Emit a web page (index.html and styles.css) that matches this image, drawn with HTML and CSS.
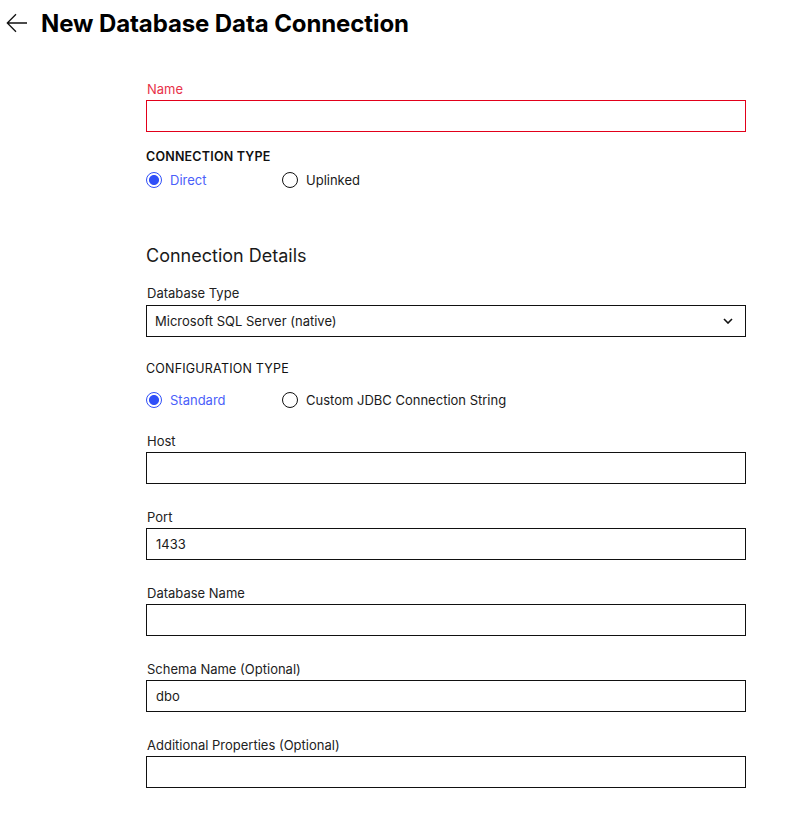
FILE: index.html
```html
<!DOCTYPE html>
<html lang="en">
<head>
<meta charset="utf-8">
<title>New Database Data Connection</title>
<link rel="stylesheet" href="styles.css">
</head>
<body>
<header class="page-header">
  <button class="back" aria-label="Back">
    <svg width="22" height="20" viewBox="0 0 22 20" fill="none" stroke="#111" stroke-width="1.3">
      <path d="M21 10H1.5M10 1.2L1.3 10L10 18.8"/>
    </svg>
  </button>
  <h1 class="title">New Database Data Connection</h1>
</header>

<main class="form">
  <div class="field name-field">
    <label class="label label-error">Name</label>
    <div class="input input-error"></div>
  </div>

  <div class="section-caption strong">CONNECTION TYPE</div>
  <div class="radio-row">
    <div class="radio checked"><span class="dot"></span><span>Direct</span></div>
    <div class="radio"><span class="dot"></span><span>Uplinked</span></div>
  </div>

  <h2 class="section-title">Connection Details</h2>

  <div class="field db-type">
    <label class="label">Database Type</label>
    <div class="input select">
      <span>Microsoft SQL Server (native)</span>
      <svg width="10" height="6" viewBox="0 0 10 6" fill="none" stroke="#111" stroke-width="1.6"><path d="M1 1L5 5L9 1"/></svg>
    </div>
  </div>

  <div class="section-caption config">CONFIGURATION TYPE</div>
  <div class="radio-row config-row">
    <div class="radio checked"><span class="dot"></span><span>Standard</span></div>
    <div class="radio"><span class="dot"></span><span>Custom JDBC Connection String</span></div>
  </div>

  <div class="field-list">
    <div class="field">
      <label class="label">Host</label>
      <div class="input"></div>
    </div>
    <div class="field">
      <label class="label">Port</label>
      <div class="input">1433</div>
    </div>
    <div class="field">
      <label class="label">Database Name</label>
      <div class="input"></div>
    </div>
    <div class="field">
      <label class="label">Schema Name (Optional)</label>
      <div class="input">dbo</div>
    </div>
    <div class="field">
      <label class="label">Additional Properties (Optional)</label>
      <div class="input"></div>
    </div>
  </div>
</main>
</body>
</html>
```

FILE: styles.css
```css
* { box-sizing: border-box; }

body {
  margin: 0;
  background: #fff;
  font-family: Inter, "Noto Sans", sans-serif;
  color: #1a1a1a;
}

.page-header {
  display: flex;
  align-items: center;
  height: 46px;
  padding-left: 6px;
}

.back {
  display: flex;
  border: 0;
  background: none;
  padding: 0;
  margin-right: 13px;
}

.title {
  margin: 0;
  font-size: 24px;
  font-weight: 700;
  color: #000;
  letter-spacing: -0.1px;
}

.form {
  width: 600px;
  margin-left: 146px;
  padding-top: 35px;
}

.field {
  display: flex;
  flex-direction: column;
  gap: 3px;
}

.label {
  font-size: 13px;
  line-height: 16px;
  color: #222;
  padding-left: 1px;
}

.label-error { color: #e8334a; }

.input {
  height: 32px;
  border: 1px solid #111;
  font-size: 13px;
  display: flex;
  align-items: center;
  padding: 0 9px;
  color: #1a1a1a;
}

.input-error { border-color: #e2001a; }

.select {
  justify-content: space-between;
  padding-left: 8px;
  padding-right: 12px;
  padding-bottom: 1px;
}

.section-caption {
  font-size: 12.5px;
  line-height: 16px;
  letter-spacing: 0.2px;
  color: #111;
}

.strong {
  font-weight: 600;
  margin-top: 17px;
}

.radio-row {
  display: flex;
  margin-top: 5px;
  height: 20px;
  align-items: center;
}

.radio {
  display: flex;
  align-items: center;
  gap: 8px;
  width: 136px;
  font-size: 13px;
  color: #1a1a1a;
  white-space: nowrap;
}

.radio:last-child { width: auto; }

.dot {
  width: 16px;
  height: 16px;
  border: 1.5px solid #111;
  border-radius: 50%;
  flex: none;
}

.radio.checked { color: #4b5ffa; }
.radio.checked .dot {
  border-color: #3050f8;
  background: radial-gradient(circle, #3050f8 0 4.6px, #fff 5.4px);
}

.section-title {
  margin: 54px 0 0;
  font-size: 18px;
  line-height: 24px;
  font-weight: 400;
  color: #1a1a1a;
}

.db-type { margin-top: 17px; gap: 4px; }

.config {
  margin-top: 24px;
}

.config-row { margin-top: 13px; }

.field-list {
  margin-top: 23px;
  display: flex;
  flex-direction: column;
  gap: 25px;
}
```
